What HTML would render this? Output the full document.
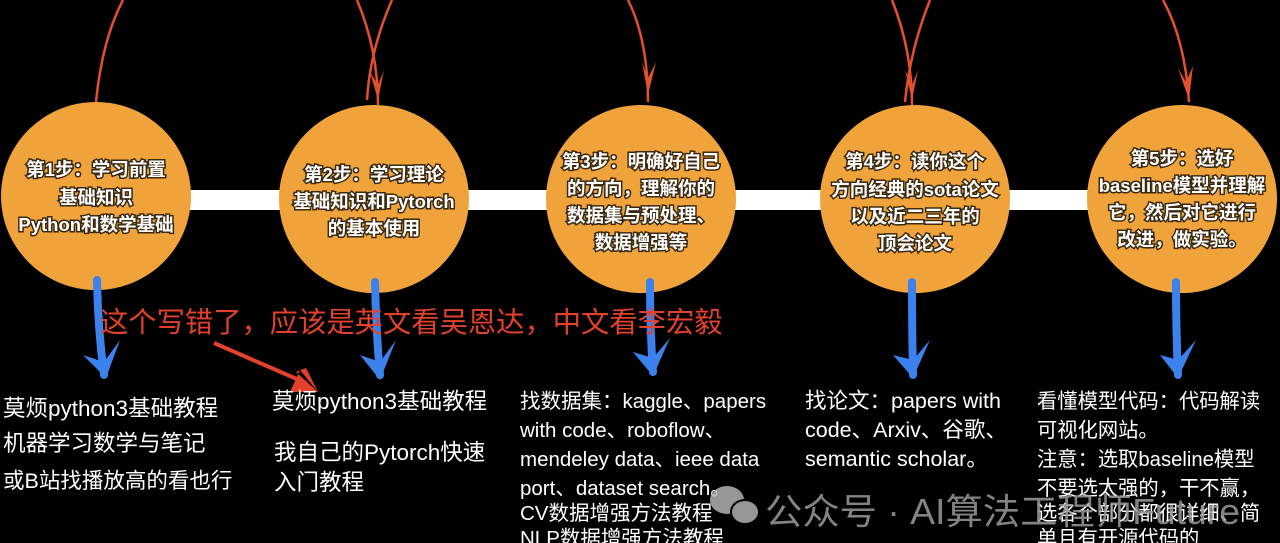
<!DOCTYPE html>
<html><head><meta charset="utf-8"><style>
html,body{margin:0;padding:0;background:#000;width:1280px;height:543px;overflow:hidden}
svg{display:block}
.c{font-family:"Liberation Sans","Noto Sans CJK SC",sans-serif;font-weight:bold;font-size:18.5px;fill:#fff;stroke:#3a2a10;stroke-width:3px;paint-order:stroke;text-anchor:middle}
.w{font-family:"Liberation Sans","Noto Sans CJK SC",sans-serif;fill:#fff}
</style></head><body>
<svg width="1280" height="543" viewBox="0 0 1280 543" xmlns="http://www.w3.org/2000/svg">
<rect width="1280" height="543" fill="#000"/>
<rect x="150" y="190" width="1000" height="20" fill="#fff"/>
<g fill="none" stroke="#e4502f" stroke-width="2.5">
<path d="M123 0 Q102 40 96 102"/>
<path d="M357 0 Q378 50 378 105"/>
<path d="M392 0 Q370 50 367 100"/>
<path d="M628 0 Q648 40 648 102"/>
<path d="M892 0 Q912 50 912 105"/>
<path d="M930 0 Q910 50 905 102"/>
<path d="M1163 0 Q1185 40 1189 102"/>
</g>
<g fill="#e4502f">
<path d="M370 72 L378 100 L384 70 L378 85Z"/>
<path d="M642 62 L648 95 L656 62 L648 78Z"/>
<path d="M905 70 L912 100 L918 70 L912 85Z"/>
<path d="M1178 68 L1189 100 L1193 66 L1186 82Z"/>
</g>
<g fill="#f0a33a">
<ellipse cx="96" cy="196" rx="95" ry="94"/>
<ellipse cx="374" cy="199" rx="95" ry="94"/>
<ellipse cx="641" cy="199" rx="95" ry="94"/>
<ellipse cx="915" cy="199" rx="95" ry="94"/>
<ellipse cx="1182" cy="199" rx="95" ry="94"/>
</g>
<g class="c">
<text x="96" y="176">第1步：学习前置</text>
<text x="96" y="204">基础知识</text>
<text x="96" y="231">Python和数学基础</text>
<text x="374" y="181">第2步：学习理论</text>
<text x="374" y="208">基础知识和Pytorch</text>
<text x="374" y="235">的基本使用</text>
<text x="641" y="168">第3步：明确好自己</text>
<text x="641" y="195">的方向，理解你的</text>
<text x="641" y="222">数据集与预处理、</text>
<text x="641" y="249">数据增强等</text>
<text x="915" y="168">第4步：读你这个</text>
<text x="915" y="196">方向经典的sota论文</text>
<text x="915" y="223">以及近二三年的</text>
<text x="915" y="250">顶会论文</text>
<text x="1182" y="165">第5步：选好</text>
<text x="1182" y="192">baseline模型并理解</text>
<text x="1182" y="219">它，然后对它进行</text>
<text x="1182" y="246">改进，做实验。</text>
</g>
<g stroke="#3b82ee" stroke-width="8" fill="none" stroke-linecap="round">
<path d="M97 280 Q98 330 104 375"/>
<path d="M375 282 Q376 330 380 375"/>
<path d="M650 282 Q650 330 653 372"/>
<path d="M912 282 Q912 330 913 375"/>
<path d="M1176 282 Q1176 330 1178 375"/>
</g>
<g fill="#3b82ee">
<path d="M83 355 L106 378 L120 340 L104 362Z"/>
<path d="M360 355 L380 380 L396 340 L380 362Z"/>
<path d="M633 352 L653 376 L670 338 L653 358Z"/>
<path d="M893 355 L913 378 L930 340 L913 360Z"/>
<path d="M1160 355 L1178 378 L1196 340 L1178 360Z"/>
</g>
<text x="100" y="332" style="font-family:'Liberation Sans','Noto Sans CJK SC',sans-serif;font-size:28.3px;fill:#e4412c">这个写错了，应该是英文看吴恩达，中文看李宏毅</text>
<path d="M214 343 L306 383" stroke="#e4412c" stroke-width="4"/>
<path d="M296 372 L318 392 L306 368Z M300 370 L318 392 L290 392Z" fill="#e4412c"/>
<g class="w" style="font-size:22.5px">
<text x="3" y="416">莫烦python3基础教程</text>
<text x="3" y="451">机器学习数学与笔记</text>
<text x="3" y="488" style="font-size:21.5px">或B站找播放高的看也行</text>
<text x="272" y="409">莫烦python3基础教程</text>
<text x="274" y="460">我自己的Pytorch快速</text>
<text x="274" y="490">入门教程</text>
</g>
<g class="w" style="font-size:20.5px">
<text x="520" y="408">找数据集：kaggle、papers</text>
<text x="520" y="437">with code、roboflow、</text>
<text x="520" y="466">mendeley data、ieee data</text>
<text x="520" y="495">port、dataset search。</text>
<text x="520" y="520">CV数据增强方法教程</text>
<text x="520" y="545">NLP数据增强方法教程</text>
</g>
<g class="w" style="font-size:20.3px">
<text x="1037" y="408">看懂模型代码：代码解读</text>
<text x="1037" y="437">可视化网站。</text>
<text x="1037" y="466">注意：选取baseline模型</text>
<text x="1037" y="495">不要选太强的，干不赢，</text>
<text x="1037" y="520">选各个部分都很详细、简</text>
<text x="1037" y="545">单且有开源代码的</text>
</g>
<g class="w" style="font-size:21.5px">
<text x="805" y="408">找论文：papers with</text>
<text x="805" y="437">code、Arxiv、谷歌、</text>
<text x="805" y="466">semantic scholar。</text>
</g>
<g fill="#bdbdbd" opacity="0.8">
<ellipse cx="727" cy="500" rx="17" ry="14"/>
<ellipse cx="745" cy="512" rx="14" ry="12" stroke="#000" stroke-width="2"/>
</g>
<text x="765" y="524" textLength="475" lengthAdjust="spacingAndGlyphs" style="font-family:'Liberation Sans','Noto Sans CJK SC',sans-serif;font-size:36px;fill:#9a9a9a;opacity:0.85">公众号 · AI算法工程师Future</text>
</svg>
</body></html>
